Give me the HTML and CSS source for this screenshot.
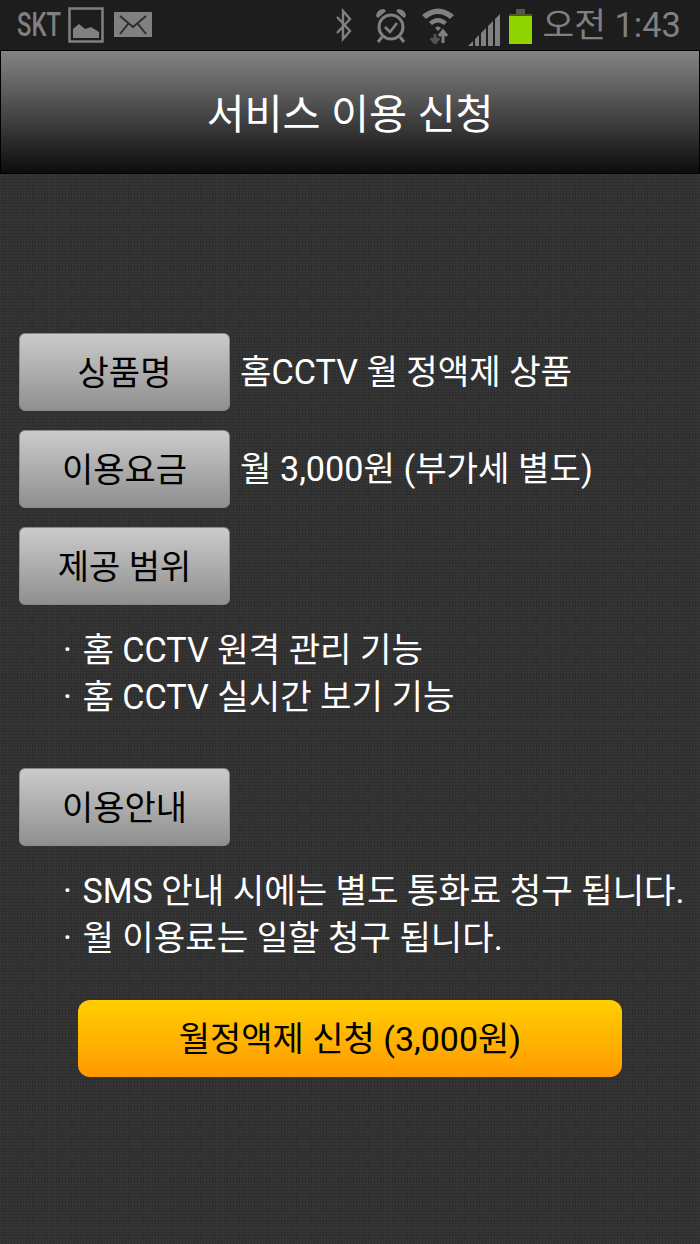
FILE: index.html
```html
<!DOCTYPE html>
<html lang="ko">
<head>
    <meta charset="UTF-8">
    <title>서비스 이용 신청</title>
    <link rel="stylesheet" href="styles.css">
</head>
<body>
<div id="status">
    <div class="status-left">
        <span class="carrier">SKT</span>
        <svg class="ic-pic" width="36" height="36" viewBox="0 0 36 36">
            <rect x="1.5" y="1.5" width="33" height="33" fill="none" stroke="#808080" stroke-width="2.5"/>
            <path d="M5 31V22L11 17L17 22L23 20L31 25V31Z" fill="#808080"/>
        </svg>
        <svg class="ic-mail" width="38" height="26" viewBox="0 0 38 26">
            <rect width="38" height="25" fill="#808080"/>
            <path d="M6 4L19 15L32 4M6 22L14 12M32 22L24 12" fill="none" stroke="#2c2c2c" stroke-width="2"/>
        </svg>
    </div>
    <div class="status-right">
        <svg class="ic-bt" width="20" height="34" viewBox="0 0 20 34">
            <path d="M3 9L16 23L9 31V3L16 11L3 25" fill="none" stroke="#808080" stroke-width="2.4"/>
        </svg>
        <svg class="ic-alarm" width="34" height="36" viewBox="0 0 34 36">
            <circle cx="17" cy="20" r="12" fill="none" stroke="#808080" stroke-width="3"/>
            <path d="M11 20L16 25L23 16" fill="none" stroke="#808080" stroke-width="2.6"/>
            <path d="M2 9Q3 2 10 2L12 4L4 11ZM32 9Q31 2 24 2L22 4L30 11Z" fill="#808080"/>
            <path d="M8 30L4 35M26 30L30 35" stroke="#808080" stroke-width="3"/>
        </svg>
        <svg class="ic-wifi" width="34" height="38" viewBox="0 0 34 38">
            <path d="M1 9Q17 -4 33 9L29 13Q17 3 5 13Z" fill="#808080"/>
            <path d="M8 16Q17 8 26 16L23 19Q17 14 11 19Z" fill="#808080"/>
            <path d="M14 22Q17 19 20 22L17 25Z" fill="#808080"/>
            <path d="M14 28V37M10 32L14 37L18 32" fill="none" stroke="#555" stroke-width="3"/>
            <path d="M22 37V26M18 30L22 25L26 30" fill="none" stroke="#808080" stroke-width="3"/>
        </svg>
        <svg class="ic-signal" width="32" height="32" viewBox="0 0 32 32">
            <path d="M0 32L5 27V32ZM7 25L11 21V32H7ZM13 19L18 14V32H13ZM20 12L25 7V32H20ZM27 5L32 0V32H27Z" fill="#808080"/>
        </svg>
        <div class="battery"><div class="battery-cap"></div><div class="battery-body"></div></div>
        <span class="clock">오전 1:43</span>
    </div>
</div>
<div id="title">서비스 이용 신청</div>
<div id="content">
    <div class="row">
        <div class="label">상품명</div>
        <div class="value">홈CCTV 월 정액제 상품</div>
    </div>
    <div class="row">
        <div class="label">이용요금</div>
        <div class="value">월 3,000원 (부가세 별도)</div>
    </div>
    <div class="row">
        <div class="label">제공 범위</div>
    </div>
    <ul class="notes">
        <li><span class="dot">·</span> 홈 CCTV 원격 관리 기능</li>
        <li><span class="dot">·</span> 홈 CCTV 실시간 보기 기능</li>
    </ul>
    <div class="row">
        <div class="label">이용안내</div>
    </div>
    <ul class="notes last">
        <li><span class="dot">·</span> SMS 안내 시에는 별도 통화료 청구 됩니다.</li>
        <li><span class="dot">·</span> 월 이용료는 일할 청구 됩니다.</li>
    </ul>
    <div class="submit">월정액제 신청 (3,000원)</div>
</div>
</body>
</html>
```

FILE: styles.css
```css
*{
    box-sizing: border-box;
}
html,body{
    margin: 0;
    padding: 0;
}
body{
    width: 700px;
    height: 1244px;
    overflow: hidden;
    font-family: "Roboto", "Noto Sans CJK KR", sans-serif;
    background-color: #2f2f2f;
    background-image:
        radial-gradient(circle at 1px 1px, #363636 0, #363636 0.8px, transparent 1.3px),
        radial-gradient(circle at 3px 3px, #2a2a2a 0, #2a2a2a 2px, transparent 3px);
    background-size: 3px 3px, 14px 14px;
}
#status{
    height: 50px;
    background-color: #1d1d1d;
    display: flex;
    justify-content: space-between;
    align-items: center;
    color: #808080;
}
.status-left{
    display: flex;
    align-items: center;
    padding-left: 17px;
}
.carrier{
    display: inline-block;
    width: 44px;
    font-size: 33px;
    font-weight: 500;
    line-height: 50px;
    transform: scaleX(0.72);
    transform-origin: left center;
}
.ic-pic{
    margin: 0 0 0 7px;
}
.ic-mail{
    margin: 0 0 0 10px;
}
.status-right{
    display: flex;
    align-items: center;
    padding-right: 19px;
}
.ic-bt{
    margin-right: 20px;
}
.ic-alarm{
    margin-right: 13px;
}
.ic-wifi{
    margin-right: 13px;
}
.ic-signal{
    margin: 9px 9px 0 0;
}
.battery{
    width: 23px;
    margin-top: 3px;
}
.battery-cap{
    width: 9px;
    height: 5px;
    margin: 0 auto;
    background-color: #555;
}
.battery-body{
    height: 30px;
    background-color: #8fd400;
    border-top: 2px solid #4a5a20;
}
.clock{
    font-size: 34.5px;
    line-height: 50px;
    margin-left: 10px;
}
#title{
    height: 124px;
    border: 1px solid #000;
    background: linear-gradient(#848484, #0c0c0c);
    color: #fff;
    font-size: 41.4px;
    line-height: 128px;
    text-align: center;
}
#content{
    padding: 159px 0 0 19px;
}
.row{
    display: flex;
    align-items: center;
    height: 78px;
    margin-bottom: 19px;
}
.label{
    width: 211px;
    height: 78px;
    border: 1px solid #8a8a8a;
    border-radius: 6px;
    background: linear-gradient(#cbcbcb, #8f8f8f);
    color: #000;
    font-size: 34px;
    line-height: 79px;
    text-align: center;
}
.value{
    margin-left: 10px;
    color: #fff;
    font-size: 34.2px;
    line-height: 82px;
    white-space: nowrap;
}
.notes{
    list-style: none;
    margin: 22px 0 47px 0;
    padding: 0 0 0 44px;
    color: #fff;
    font-size: 34.2px;
    line-height: 47px;
    white-space: nowrap;
}
.notes.last{
    margin-bottom: 38px;
}
.dot{
    margin-right: 2px;
}
.submit{
    width: 544px;
    height: 77px;
    margin: 0 0 0 59px;
    border-radius: 12px;
    background: linear-gradient(#ffcf00, #ff9900);
    color: #000;
    font-size: 34px;
    line-height: 78px;
    text-align: center;
}
```
